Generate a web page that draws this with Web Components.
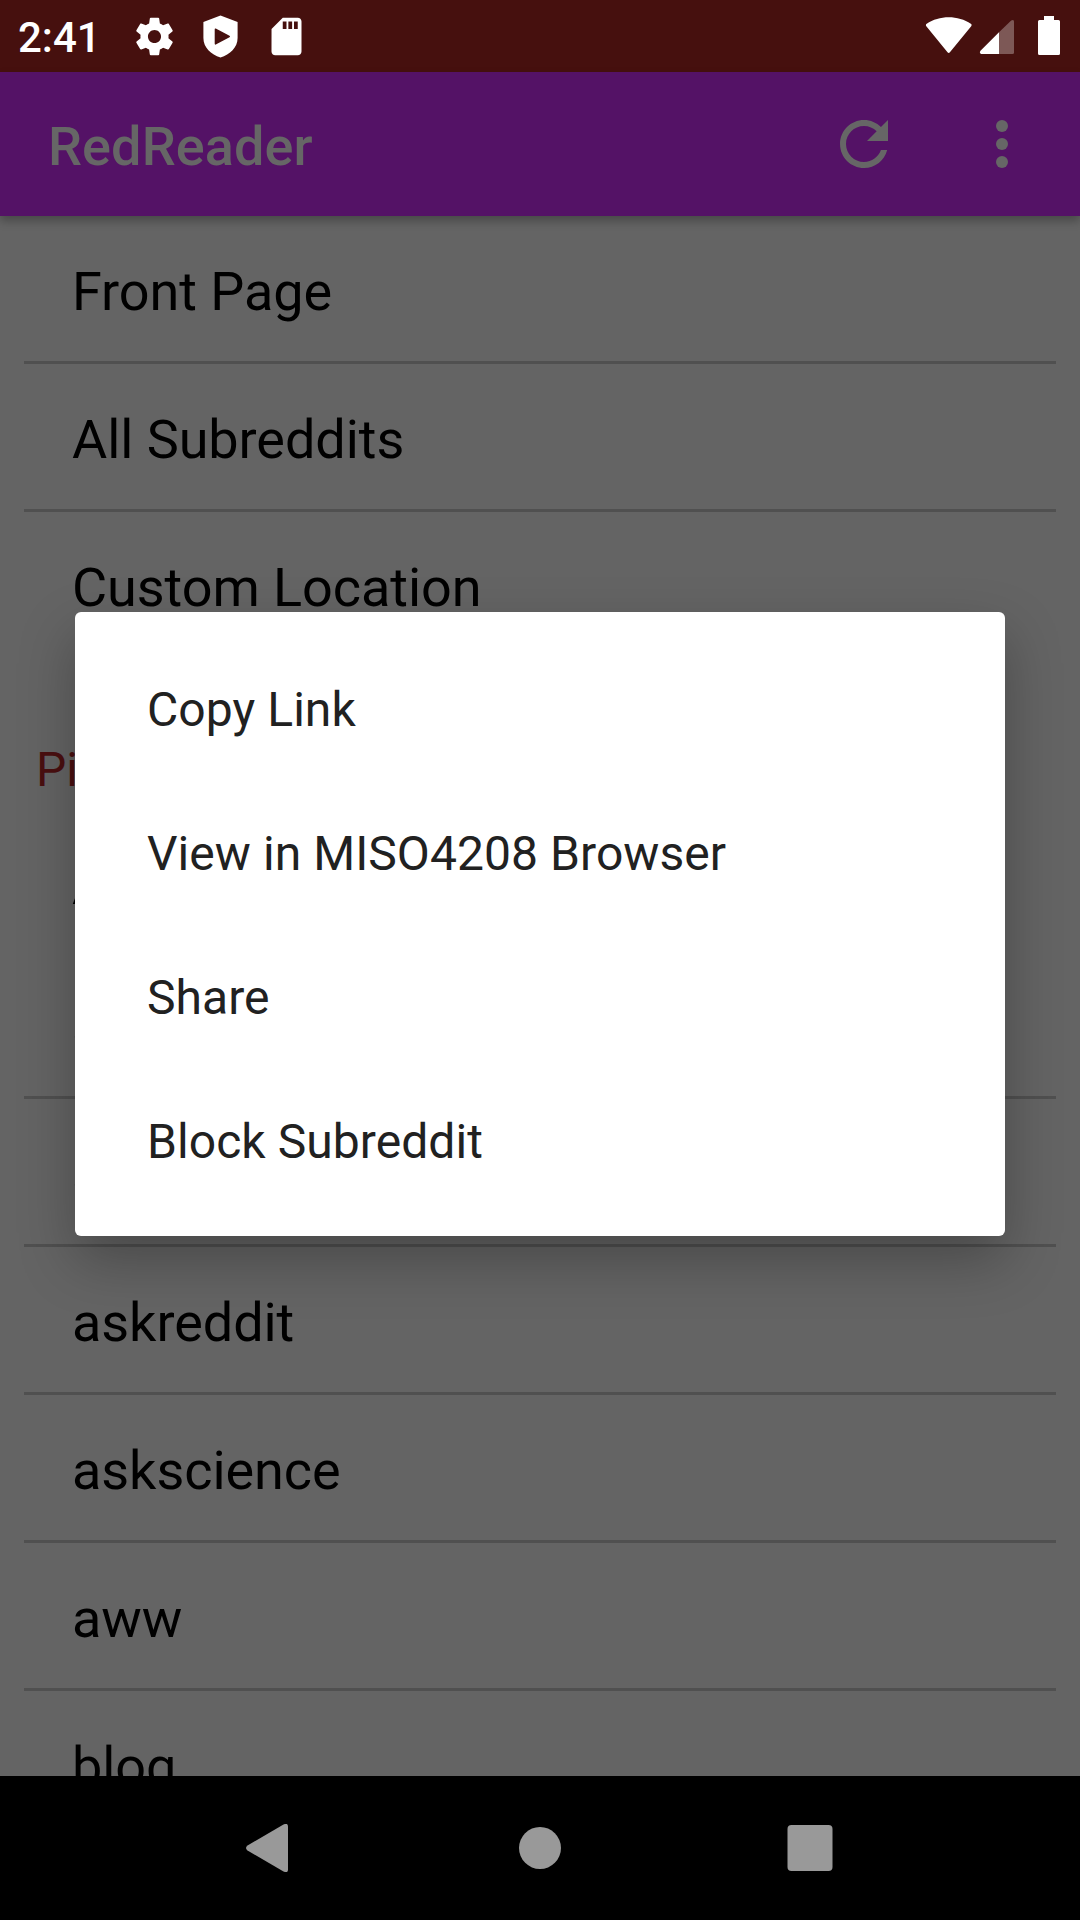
<!DOCTYPE html>
<html lang="en">
<head>
<meta charset="utf-8">
<title>RedReader</title>
<style>
html,body{margin:0;padding:0;background:#000}
body{width:1080px;height:1920px;overflow:hidden;font-family:Roboto,"Noto Sans",sans-serif}
</style>
</head>
<body>
<phone-screen>
  <status-bar slot="status" time="2:41"></status-bar>
  <app-bar slot="bar">RedReader</app-bar>
  <list-row divider>Front Page</list-row>
  <list-row divider>All Subreddits</list-row>
  <list-row>Custom Location</list-row>
  <section-header>Pi</section-header>
  <list-row short>A</list-row>
  <list-row divider>a</list-row>
  <list-row divider>a</list-row>
  <list-row divider>askreddit</list-row>
  <list-row divider>askscience</list-row>
  <list-row divider>aww</list-row>
  <list-row>blog</list-row>
  <nav-bar slot="nav"></nav-bar>
  <menu-dialog slot="dialog">
    <menu-item>Copy Link</menu-item>
    <menu-item>View in MISO4208 Browser</menu-item>
    <menu-item>Share</menu-item>
    <menu-item>Block Subreddit</menu-item>
  </menu-dialog>
</phone-screen>
<script>
function define(name, html) {
  customElements.define(name, class extends HTMLElement {
    constructor() {
      super();
      this.attachShadow({ mode: 'open' }).innerHTML = html;
    }
    connectedCallback() {
      const clock = this.shadowRoot.querySelector('.time');
      if (clock) clock.textContent = this.getAttribute('time');
    }
  });
}

define('phone-screen', `
<style>
:host{display:flex;flex-direction:column;position:relative;width:1080px;height:1920px;overflow:hidden;background:#646464}
main{flex:1;min-height:0;overflow:hidden;display:flex;flex-direction:column}
</style>
<slot name="status"></slot><slot name="bar"></slot>
<main><slot></slot></main>
<slot name="nav"></slot><slot name="dialog"></slot>`);

define('status-bar', `
<style>
:host{display:flex;flex:none;align-items:center;height:72px;background:#46100e;color:#fff;box-sizing:border-box;padding:0 20px 0 18px}
.time{font-size:42px;font-weight:500;line-height:72px;width:114px;padding-top:2px;height:72px;box-sizing:border-box}
.left{display:flex;gap:21px;flex:1}
.right{display:flex}
svg{display:block;fill:#fff}
</style>
<span class="time"></span>
<div class="left">
<svg width="45" height="45" viewBox="0 0 24 24"><path d="M19.43 12.98c.04-.32.07-.64.07-.98s-.03-.66-.07-.98l2.11-1.65c.19-.15.24-.42.12-.64l-2-3.46c-.12-.22-.39-.3-.61-.22l-2.49 1c-.52-.4-1.08-.73-1.69-.98l-.38-2.65C14.46 2.18 14.25 2 14 2h-4c-.25 0-.46.18-.49.42l-.38 2.65c-.61.25-1.17.59-1.69.98l-2.49-1c-.23-.09-.49 0-.61.22l-2 3.46c-.13.22-.07.49.12.64l2.11 1.65c-.04.32-.07.65-.07.98s.03.66.07.98l-2.11 1.65c-.19.15-.24.42-.12.64l2 3.46c.12.22.39.3.61.22l2.49-1c.52.4 1.08.73 1.69.98l.38 2.65c.03.24.24.42.49.42h4c.25 0 .46-.18.49-.42l.38-2.65c.61-.25 1.17-.59 1.69-.98l2.49 1c.23.09.49 0 .61-.22l2-3.46c.12-.22.07-.49-.12-.64l-2.11-1.65zM12 15.5c-1.93 0-3.5-1.57-3.5-3.5s1.57-3.5 3.5-3.5 3.5 1.57 3.5 3.5-1.57 3.5-3.5 3.5z"/></svg>
<svg width="45" height="45" viewBox="0 0 45 45"><path fill-rule="evenodd" d="M22.5 1.5L39.6 8V24C39.6 33.5 32 40.500 22.500 43.500C13 40.500 5.400 33.500 5.400 24V8ZM17.800 14.500Q16.700 14 16.700 15.500V29.500Q16.700 31 17.800 30.500L31.500 23.300Q32.700 22.500 31.500 21.700Z"/></svg>
<svg width="45" height="45" viewBox="0 0 24 24"><path d="M18 2h-8L4.020 8 4 20c0 1.100.900 2 2 2h12c1.100 0 2-.900 2-2V4c0-1.100-.900-2-2-2zm-6 6h-2V4h2v4zm3 0h-2V4h2v4zm3 0h-2V4h2v4z"/></svg>
</div>
<svg width="135" height="40" viewBox="925 16 135 40">
<path d="M926.300 26.200Q925.300 24.800 926.700 23.800C939 14.900 958.500 14.900 970.800 23.800Q972.200 24.800 971.200 26.200L949.900 52.200Q948.700 53.600 947.500 52.200Z"/>
<path fill-opacity=".3" d="M999 32.300L1011.200 20.500Q1014 19 1014 21.500V52.500Q1014 54 1012.500 54H999Z"/>
<path d="M999 32.300V54H981Q979 52.800 980.500 50.800Z"/>
<path d="M1044 16h10v4h4.500q1.500 0 1.500 1.500v32q0 1.500-1.500 1.500h-19q-1.500 0-1.500-1.500v-32q0-1.500 1.500-1.500h4.500z"/>
</svg>`);

define('app-bar', `
<style>
:host{display:flex;flex:none;align-items:center;position:relative;height:144px;background:#541266;color:#666;box-sizing:border-box;padding:0 42px 0 48px;box-shadow:0 5px 9px rgba(0,0,0,.28)}
h1{flex:1;margin:0;padding-top:6px;font-size:54px;font-weight:500;line-height:1.172;letter-spacing:.1px}
svg{display:block;fill:#666}
.more{margin-left:66px}
</style>
<h1><slot></slot></h1>
<svg width="72" height="72" viewBox="0 0 24 24"><path d="M17.650 6.350C16.200 4.900 14.210 4 12 4c-4.420 0-7.990 3.580-7.990 8s3.570 8 7.990 8c3.730 0 6.840-2.550 7.730-6h-2.080c-.820 2.330-3.040 4-5.650 4-3.310 0-6-2.690-6-6s2.690-6 6-6c1.660 0 3.140.690 4.220 1.780L13 11h7V4l-2.350 2.350z"/></svg>
<svg class="more" width="72" height="72" viewBox="0 0 24 24"><circle cx="12" cy="6" r="2"/><circle cx="12" cy="12" r="2"/><circle cx="12" cy="18" r="2"/></svg>`);

define('list-row', `
<style>
:host{display:flex;flex:none;flex-direction:column;margin:0 24px;color:#000}
div{height:145px;box-sizing:border-box;padding:6px 48px 0;display:flex;align-items:center;font-size:54px;line-height:1.172;letter-spacing:-.06px;white-space:nowrap}
:host([divider])::after{content:"";height:3px;background:#505050}
:host([short]) div{height:142px;padding-top:12px}
</style>
<div><span><slot></slot></span></div>`);

define('section-header', `
<style>
:host{display:flex;flex:none;align-items:flex-end;height:152px;box-sizing:border-box;padding:0 36px 11px;font-size:48px;line-height:56px;color:#4a0f10}
</style>
<slot></slot>`);

define('menu-dialog', `
<style>
:host{position:absolute;left:75px;top:612px;width:930px;box-sizing:border-box;padding:24px 0;display:flex;flex-direction:column;background:#fff;border-radius:6px;box-shadow:0 24px 56px rgba(0,0,0,.28)}
</style>
<slot></slot>`);

define('menu-item', `
<style>
:host{display:flex;align-items:center;height:144px;box-sizing:border-box;padding:4px 72px 0;font-size:48px;line-height:1.172;letter-spacing:.06px;color:#212121;white-space:nowrap}
</style>
<slot></slot>`);

define('nav-bar', `
<style>
:host{display:flex;flex:none;position:relative;align-items:center;justify-content:space-between;height:144px;background:#000;box-sizing:border-box;padding:0 246px}
svg{display:block;fill:#999}
</style>
<svg width="48" height="48" viewBox="0 0 48 48"><path d="M37.500 .500Q42 -1.500 42 2.500V45.500Q42 49.500 37.500 47.500L1.500 26.500Q-1.500 24 1.500 21.500Z"/></svg>
<svg width="42" height="42" viewBox="0 0 42 42"><circle cx="21" cy="21" r="21"/></svg>
<svg width="48" height="46" viewBox="0 0 48 46"><rect x="1.500" y="0" width="45" height="46" rx="4"/></svg>`);
</script>
</body>
</html>
